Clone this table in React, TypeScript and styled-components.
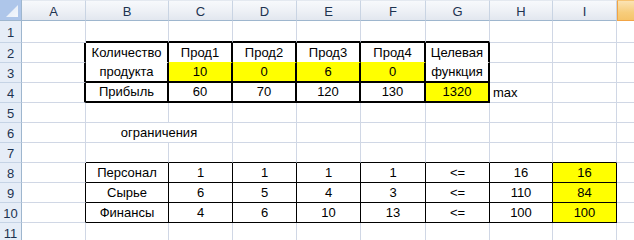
import React from "react";
import styled, { createGlobalStyle } from "styled-components";

const GlobalStyle = createGlobalStyle`
  html, body {
    margin: 0;
    padding: 0;
    background: #fff;
    overflow: hidden;
  }
  body {
    font-family: "Liberation Sans", Arial, sans-serif;
  }
`;

type Edge = "grid" | "thin" | "thick" | "blank" | "fill";

interface CellSpec {
  v?: string;
  fill?: boolean;
  r?: Edge;
  b?: Edge;
  left?: boolean;
  span?: number;
}

const COLS = ["A", "B", "C", "D", "E", "F", "G", "H", "I", "J"];
const WIDTHS = [64, 83, 64, 64, 64, 65, 64, 63, 64, 64];
const HEIGHTS = [22, 20, 20, 20, 20, 20, 20, 20, 20, 20, 20];
// the selected column sits at the right edge, its letter scrolled out of view
const ACTIVE_COL = "J";

const YELLOW = "#ffff00";

const edge = (e: Edge = "grid") => {
  switch (e) {
    case "thin":
      return "1px solid #000";
    case "thick":
      return "2px solid #000";
    case "blank":
      return "1px solid #fff";
    case "fill":
      return `1px solid ${YELLOW}`;
    default:
      return "1px solid #d0d7e5";
  }
};

// build the sheet row by row
const sheet: CellSpec[][] = HEIGHTS.map(() => COLS.map(() => ({})));
const put = (row: number, col: number, spec: CellSpec) => {
  sheet[row - 1][col] = { ...sheet[row - 1][col], ...spec };
};

// top block: quantities, profit, objective (B2:G4)
for (let c = 1; c <= 6; c++) put(1, c, { b: "thick" });
for (let r = 2; r <= 4; r++) put(r, 0, { r: "thick" });

put(2, 1, { v: "Количество", r: "thick", b: "blank" });
["Прод1", "Прод2", "Прод3", "Прод4"].forEach((v, i) =>
  put(2, 2 + i, { v, r: "thick", b: "fill" })
);
put(2, 6, { v: "Целевая", r: "thick", b: "blank" });

put(3, 1, { v: "продукта", r: "thick", b: "thick" });
["10", "0", "6", "0"].forEach((v, i) =>
  put(3, 2 + i, { v, fill: true, r: "thick", b: "thick" })
);
put(3, 6, { v: "функция", r: "thick", b: "thick" });

put(4, 1, { v: "Прибыль", r: "thick", b: "thick" });
["60", "70", "120", "130"].forEach((v, i) =>
  put(4, 2 + i, { v, r: "thick", b: "thick" })
);
put(4, 6, { v: "1320", fill: true, r: "thick", b: "thick" });
put(4, 7, { v: "max", left: true });

// constraints caption spills over B6:C6
put(6, 1, { v: "ограничения", span: 2 });

// constraints table (B8:I10)
const limits = [
  ["Персонал", "1", "1", "1", "1", "<=", "16", "16"],
  ["Сырье", "6", "5", "4", "3", "<=", "110", "84"],
  ["Финансы", "4", "6", "10", "13", "<=", "100", "100"],
];
for (let c = 1; c <= 8; c++) put(7, c, { b: "thin" });
limits.forEach((row, i) => {
  put(8 + i, 0, { r: "thin" });
  row.forEach((v, j) =>
    put(8 + i, 1 + j, { v, r: "thin", b: "thin", fill: j === 7 })
  );
});

const Sheet = styled.div`
  display: grid;
  grid-template-columns: 22px ${WIDTHS.map((w) => `${w}px`).join(" ")};
  grid-template-rows: 21px ${HEIGHTS.map((h) => `${h}px`).join(" ")};
  width: 634px;
  height: 240px;
  overflow: hidden;
  background: #fff;
`;

const Corner = styled.div`
  position: relative;
  box-sizing: border-box;
  background: #aec6ea;
  border-right: 1px solid #9eb6ce;
  border-bottom: 1px solid #9eb6ce;

  &::after {
    content: "";
    position: absolute;
    right: 3px;
    bottom: 3px;
    width: 12px;
    height: 12px;
    background: linear-gradient(135deg, #dfe9f7, #f4f7fc);
    clip-path: polygon(100% 0, 100% 100%, 0 100%);
  }
`;

const ColumnHeader = styled.div<{ $active?: boolean }>`
  box-sizing: border-box;
  display: flex;
  align-items: center;
  justify-content: center;
  padding-top: 2px;
  font-size: 13px;
  color: #1d3350;
  background: ${(p) =>
    p.$active
      ? "linear-gradient(#fbe3b4, #f7cd7c 60%, #f5c46a)"
      : "linear-gradient(#f7f9fc, #eef1f6 50%, #e2e7ef)"};
  border-right: 1px solid ${(p) => (p.$active ? "#f2a445" : "#c9d4e3")};
  border-left: ${(p) => (p.$active ? "1px solid #f2a445" : "none")};
  border-bottom: 1px solid ${(p) => (p.$active ? "#f2a445" : "#9eb6ce")};
  border-top: 1px solid ${(p) => (p.$active ? "#f6c372" : "#e4e9f0")};
`;

const RowHeader = styled.div`
  box-sizing: border-box;
  display: flex;
  align-items: center;
  justify-content: center;
  padding-top: 2px;
  font-size: 13px;
  color: #1d3350;
  background: #e6edf7;
  border-right: 1px solid #9eb6ce;
  border-bottom: 1px solid #c5d3e5;
`;

const Cell = styled.div<{
  $fill?: boolean;
  $r?: Edge;
  $b?: Edge;
  $left?: boolean;
  $span?: number;
}>`
  box-sizing: border-box;
  grid-column: span ${(p) => p.$span ?? 1};
  display: flex;
  align-items: flex-end;
  justify-content: ${(p) => (p.$left ? "flex-start" : "center")};
  padding: 0 3px 1px;
  font-size: 13px;
  line-height: 16px;
  color: #000;
  white-space: nowrap;
  overflow: hidden;
  background: ${(p) => (p.$fill ? YELLOW : "#fff")};
  border-right: ${(p) => edge(p.$r)};
  border-bottom: ${(p) => edge(p.$b)};
`;

export default function App() {
  return (
    <>
      <GlobalStyle />
      <Sheet>
        <Corner />
        {COLS.map((c) => (
          <ColumnHeader key={c} $active={c === ACTIVE_COL}>
            {c === ACTIVE_COL ? null : c}
          </ColumnHeader>
        ))}
        {sheet.map((row, ri) => {
          let skip = 0;
          return (
            <React.Fragment key={ri}>
              <RowHeader>{ri + 1}</RowHeader>
              {row.map((cell, ci) => {
                if (skip > 0) {
                  skip--;
                  return null;
                }
                if (cell.span) skip = cell.span - 1;
                return (
                  <Cell
                    key={ci}
                    $fill={cell.fill}
                    $r={cell.r}
                    $b={cell.b}
                    $left={cell.left}
                    $span={cell.span}
                  >
                    {cell.v}
                  </Cell>
                );
              })}
            </React.Fragment>
          );
        })}
      </Sheet>
    </>
  );
}
